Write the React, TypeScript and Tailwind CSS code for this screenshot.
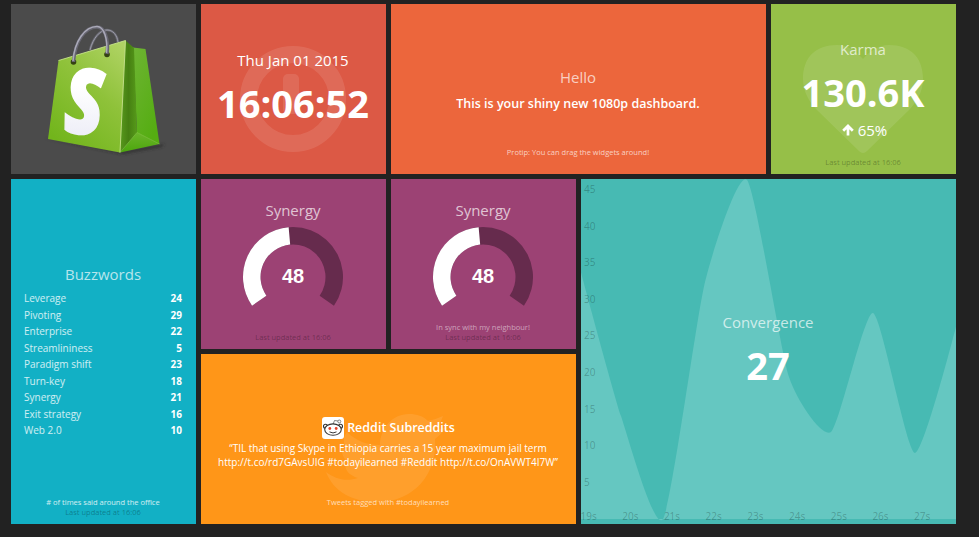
import React from "react";

const TITLE = "text-[15px] leading-5 whitespace-nowrap";
const SMALL = "text-[7.5px] leading-[10px] whitespace-nowrap";

function Tile({ className, children }: { className: string; children: React.ReactNode }) {
  return (
    <section className={`relative isolate flex flex-col items-center overflow-hidden text-white ${className}`}>
      {children}
    </section>
  );
}

function Updated() {
  return <p className={`${SMALL} text-black/30`}>Last updated at 16:06</p>;
}

function ShoppingBag() {
  return (
    <svg viewBox="0 0 185 170" className="h-[170px] w-[185px]">
      <defs>
        <linearGradient id="front" x1="0.9" y1="0" x2="0.3" y2="1">
          <stop offset="0" stopColor="#b0d364" />
          <stop offset="0.45" stopColor="#8fc23a" />
          <stop offset="1" stopColor="#72b51c" />
        </linearGradient>
        <linearGradient id="side" x1="0" y1="0" x2="1" y2="0">
          <stop offset="0" stopColor="#58991d" />
          <stop offset="0.5" stopColor="#468012" />
          <stop offset="1" stopColor="#569a1a" />
        </linearGradient>
        <linearGradient id="back" x1="0" y1="0" x2="0.6" y2="1">
          <stop offset="0" stopColor="#6eb433" />
          <stop offset="1" stopColor="#55ad12" />
        </linearGradient>
        <linearGradient id="fold" x1="0" y1="0" x2="0" y2="1">
          <stop offset="0" stopColor="#6cb52b" />
          <stop offset="1" stopColor="#4ba60c" />
        </linearGradient>
        <linearGradient id="letter" x1="0" y1="0" x2="0" y2="1">
          <stop offset="0.4" stopColor="#ffffff" />
          <stop offset="1" stopColor="#e6e6f4" />
        </linearGradient>
        <filter id="shade" x="-20%" y="-100%" width="140%" height="300%">
          <feGaussianBlur stdDeviation="1.6" />
        </filter>
      </defs>
      <path d="M32 134L110 148L154 140L150 143L112 150Z" fill="#222" opacity="0.7" filter="url(#shade)" />
      <path d="M79 46C82 34 89 26 96 26C102 26 106 31 107 38" fill="none" stroke="#66666f" strokeWidth="2.6" />
      <path d="M79 46C82 34 89 26 96 26C102 26 106 31 107 38" fill="none" stroke="#9c9ca8" strokeWidth="1" />
      <path d="M122 43.500L134.500 45L148.500 140L126 129Z" fill="url(#back)" />
      <path d="M114.500 36.500L123 44L126 129L109 148Z" fill="url(#side)" />
      <path d="M109 148.500L126 128.500L148.500 140Z" fill="url(#fold)" />
      <path d="M109 148.500L126 128.500L148.500 140" fill="none" stroke="#82c63f" strokeWidth="0.6" />
      <path d="M47.500 56.500L114.500 36.500L109 148.500L37 135Z" fill="url(#front)" />
      <path d="M47.500 56.500L114.500 36.500L109 148.500" fill="none" stroke="#c6e48a" strokeWidth="0.9" />
      <circle cx="62.500" cy="58" r="2.800" fill="#354213" />
      <circle cx="96" cy="50.500" r="2.800" fill="#354213" />
      <path d="M62.500 58C64 37 74 23 86 23C94 23 98 36 96 50" fill="none" stroke="#666570" strokeWidth="3.4" />
      <path d="M62 57C63.500 37 74 22.500 86 22.500C93 22.500 97 35 95.500 49" fill="none" stroke="#aaa9b8" strokeWidth="1.500" />
      <text
        transform="translate(52.500 128.500) rotate(4) skewX(3) scale(0.88 1.08)"
        fontFamily="Open Sans, sans-serif"
        fontSize="84"
        fontWeight="800"
        fontStyle="italic"
        fill="url(#letter)"
        stroke="url(#letter)"
        strokeWidth="1.5"
      >
        S
      </text>
    </svg>
  );
}

function Gauge({ value }: { value: number }) {
  const point = (deg: number, r: number) => {
    const a = (deg * Math.PI) / 180;
    return `${50 + r * Math.sin(a)} ${50 - r * Math.cos(a)}`;
  };
  const band = (from: number, to: number) => {
    const large = to - from > 180 ? 1 : 0;
    return `M${point(from, 50)}A50 50 0 ${large} 1 ${point(to, 50)}L${point(to, 32.5)}A32.500 32.500 0 ${large} 0 ${point(from, 32.5)}Z`;
  };
  return (
    <svg viewBox="0 0 100 100" className="mt-[7px] h-[100px] w-[100px] shrink-0">
      <path d={band(-125, 125)} fill="#662b4d" />
      <path d={band(-125, -125 + value * 2.5)} fill="#fff" />
      <text x="50" y="56" textAnchor="middle" fontFamily="Liberation Sans, Arial, sans-serif" fontWeight="700" fontSize="20" fill="#fff">
        {value}
      </text>
    </svg>
  );
}

function Meter({ note }: { note?: string }) {
  return (
    <Tile className="bg-[#9c4274] pt-[21px] pr-px pb-[7px]">
      <h1 className={`${TITLE} text-white/70`}>Synergy</h1>
      <Gauge value={48} />
      <footer className="-mt-8 flex flex-1 flex-col items-center justify-end">
        {note && <p className={`${SMALL} text-white/50`}>{note}</p>}
        <Updated />
      </footer>
    </Tile>
  );
}

const samples: [number, number][] = [
  [-3, 86], [39, 237], [81, 340], [123, 103], [165, 1], [207, 198], [249, 253], [291, 134], [333, 274], [375, 144],
];

function areaPath(points: [number, number][]) {
  const tangent = (i: number) =>
    i === 0 || i === points.length - 1
      ? [0, 0]
      : [0.1 * (points[i + 1][0] - points[i - 1][0]), 0.1 * (points[i + 1][1] - points[i - 1][1])];
  let d = `M${points[0].join(" ")}`;
  for (let i = 1; i < points.length; i++) {
    const a = tangent(i - 1);
    const b = tangent(i);
    const p = points[i - 1];
    const q = points[i];
    d += `C${p[0] + a[0]} ${p[1] + a[1]} ${q[0] - b[0]} ${q[1] - b[1]} ${q[0]} ${q[1]}`;
  }
  return `${d}V340H-3Z`;
}

function Chart() {
  return (
    <svg viewBox="0 0 375 345" className="absolute inset-0 -z-10 h-[345px] w-[375px]">
      <path d={areaPath(samples)} transform="translate(1 0)" fill="#65c7c1" />
      <g fontFamily="Open Sans, sans-serif" fontSize="10" fill="#000" fillOpacity="0.24">
        {[45, 40, 35, 30, 25, 20, 15, 10, 5].map((n, i) => (
          <text key={n} x="3" y={14 + i * 36.6}>{n}</text>
        ))}
        {[19, 20, 21, 22, 23, 24, 25, 26, 27].map((n, i) => (
          <text key={n} x={-0.5 + i * 41.7} y="341">{n}s</text>
        ))}
      </g>
    </svg>
  );
}

function RedditBadge() {
  return (
    <svg viewBox="0 0 22 22" className="h-[22px] w-[22px]">
      <rect width="22" height="22" rx="3" fill="#fff" />
      <g fill="#fff" stroke="#333" strokeWidth="1.1">
        <path d="M11 7.500L12.500 3.500L16 4" fill="none" stroke="#666" strokeWidth="0.800" />
        <circle cx="17.300" cy="4.500" r="1.500" stroke="#666" strokeWidth="0.800" />
        <circle cx="3.500" cy="9.300" r="2" />
        <circle cx="18.500" cy="9.300" r="2" />
        <ellipse cx="11" cy="12.600" rx="8.300" ry="5.700" />
      </g>
      <circle cx="7.800" cy="11.500" r="1.400" fill="#e8412a" />
      <circle cx="14.200" cy="11.500" r="1.400" fill="#e8412a" />
      <path d="M7.500 14.900Q11 17 14.500 14.900" fill="none" stroke="#222" strokeWidth="0.900" />
    </svg>
  );
}

const buzzwords: [string, number][] = [
  ["Leverage", 24], ["Pivoting", 29], ["Enterprise", 22], ["Streamlininess", 5], ["Paradigm shift", 23],
  ["Turn-key", 18], ["Synergy", 21], ["Exit strategy", 16], ["Web 2.0", 10],
];

export default function App() {
  return (
    <main className="h-[537px] w-[979px] overflow-hidden bg-[#222] pt-1 pl-[11px] font-['Open_Sans',sans-serif]">
      <div className="grid w-[945px] grid-cols-[repeat(5,185px)] grid-rows-[repeat(3,170px)] gap-[5px]">
        <Tile className="bg-[#4b4b4b]">
          <ShoppingBag />
        </Tile>

        <Tile className="bg-[#dc5945] pt-[46px] pr-px">
          <svg viewBox="0 0 106 108" className="absolute top-[41px] left-[39px] -z-10 h-[108px] w-[106px] opacity-10">
            <circle cx="53" cy="54" r="44.500" fill="none" stroke="#fff" strokeWidth="17" />
            <rect x="43" y="29" width="16" height="40" rx="5" fill="#fff" />
          </svg>
          <h1 className={TITLE}>Thu Jan 01 2015</h1>
          <h2 className="mt-[13px] text-[38px] leading-10 font-bold">16:06:52</h2>
        </Tile>

        <Tile className="col-span-2 bg-[#ec663c] pt-[63px] pr-px pb-[17px]">
          <h1 className={`${TITLE} text-white/70`}>Hello</h1>
          <h3 className="mt-[7px] text-[12.5px] leading-5 font-semibold">This is your shiny new 1080p dashboard.</h3>
          <p className={`${SMALL} mt-auto text-white/70`}>Protip: You can drag the widgets around!</p>
        </Tile>

        <Tile className="bg-[#96bf48] pt-[35px] pr-px pb-[7px]">
          <svg viewBox="0 0 120 108" className="absolute top-[41px] left-[32px] -z-10 h-[108px] w-[120px]">
            <path
              d="M60 108Q58 108 56 106L14 65C8 59 0 48 0 34C0 12 13 0 34 0C45 0 54 7 60 14C66 7 75 0 86 0C107 0 120 12 120 34C120 48 112 59 106 65L64 106Q62 108 60 108Z"
              fill="#fff"
              fillOpacity="0.1"
            />
          </svg>
          <h1 className={`${TITLE} text-white/70`}>Karma</h1>
          <h2 className="mt-[13px] text-[38px] leading-10 font-bold">130.6K</h2>
          <p className="mt-2 flex items-center gap-1 pl-[3px] text-[15px] leading-5">
            <svg viewBox="0 0 12 12" className="h-3 w-3">
              <path d="M6 11.500V2M1.200 6.800L6 2L10.800 6.800" fill="none" stroke="#fff" strokeWidth="2.700" />
            </svg>
            65%
          </p>
          <footer className="mt-auto">
            <Updated />
          </footer>
        </Tile>

        <Tile className="row-span-2 bg-[#12b0c5] pt-[85px] pb-[7px]">
          <h1 className={`${TITLE} pr-px text-white/70`}>Buzzwords</h1>
          <ul className="mt-[6px] w-full pr-[14px] pl-[13px] text-[10px] leading-[16.5px]">
            {buzzwords.map(([word, count]) => (
              <li key={word} className="flex justify-between">
                <span className="text-white/80">{word}</span>
                <span className="font-bold">{count}</span>
              </li>
            ))}
          </ul>
          <footer className="mt-auto flex flex-col items-center pr-px">
            <p className={`${SMALL} text-white/80`}># of times said around the office</p>
            <Updated />
          </footer>
        </Tile>

        <Meter />
        <Meter note="In sync with my neighbour!" />

        <Tile className="col-span-2 row-span-2 bg-[#47bab3] pt-[133px] pr-px">
          <Chart />
          <h1 className={`${TITLE} text-white/70`}>Convergence</h1>
          <h2 className="mt-[13px] text-[38px] leading-10 font-bold">27</h2>
        </Tile>

        <Tile className="col-span-2 bg-[#ff9618] pt-[63px] pr-px pb-[17px]">
          <svg viewBox="0 0 124 92" className="absolute top-[58px] left-[124px] -z-10 h-[92px] w-[124px]">
            <path
              d="M22 20C31 29 42 33 55 33C55 17 67 2 84 2C92 2 98 4 103 9C108 8 113 6 118 4C116 10 113 14 109 18C113 18 117 17 121 15C118 20 114 24 110 27C113 62 88 90 53 90C27 90 9 80 1 60C10 67 21 70 33 66C26 64 21 60 20 53H27C20 49 16 43 17 36L24 38C18 33 17 27 22 20Z"
              fill="#fff"
              fillOpacity="0.09"
            />
          </svg>
          <div className="flex items-center gap-[3px] pl-px text-[12.5px] leading-5 font-semibold">
            <RedditBadge />
            <h3>Reddit Subreddits</h3>
          </div>
          <p className="mt-[2px] text-center text-[10px] leading-[14px] whitespace-nowrap">
            “TIL that using Skype in Ethiopia carries a 15 year maximum jail term
            <br />
            http://t.co/rd7GAvsUIG #todayilearned #Reddit http://t.co/OnAVWT4I7W”
          </p>
          <p className={`${SMALL} mt-auto text-white/70`}>Tweets tagged with #todayilearned</p>
        </Tile>
      </div>
    </main>
  );
}
